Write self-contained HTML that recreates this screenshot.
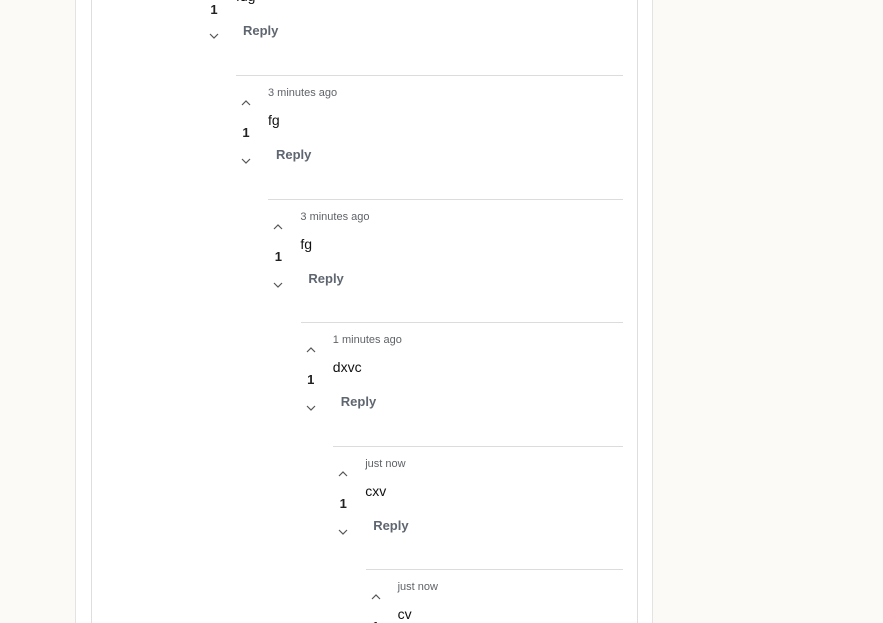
<!DOCTYPE html>
<html style="overflow:hidden;height:623px"><head><style>
body{margin:0;width:883px;height:623px;overflow:hidden;background:#fbfaf6;font-family:"Liberation Sans",sans-serif;position:relative}
.outer{position:absolute;left:75px;top:0;width:576px;height:623px;background:#fff;border-left:1px solid #e3e3e3;border-right:1px solid #e3e3e3}
.inner{position:absolute;left:91px;top:0;width:545px;height:623px;background:#fff;border-left:1px solid #dedede;border-right:1px solid #dedede}
.line{position:absolute;height:1px;background:#dcdcdc}
.t{position:absolute;font-size:11px;color:#5f6368}
.c{position:absolute;font-size:14px;color:#111}
.n{position:absolute;font-size:13px;color:#222;font-weight:bold;width:14px;text-align:center}
.r{position:absolute;font-size:13px;color:#5f6670;font-weight:bold}
svg{position:absolute}
#root{position:absolute;left:0;top:0;width:883px;height:623px;overflow:hidden}
</style></head><body>
<div class="outer"></div><div class="inner"></div>
<div id="root"></div>
<script>
var h='';
h+='<div class="c" style="left:236px;top:-12px">fdg</div>';
h+='<div class="n" style="left:207px;top:2px">1</div>';
h+='<svg style="left:208px;top:32px" width="12" height="8"><path d="M2 2l4 4 4-4" stroke="#555" stroke-width="1.2" fill="none"/></svg>';
h+='<div class="r" style="left:243px;top:23px">Reply</div>';
var data=[["3 minutes ago","fg"],["3 minutes ago","fg"],["1 minutes ago","dxvc"],["just now","cxv"],["just now","cv"]];
for(var i=0;i<5;i++){
 var x=236+i*32.4, y=75+i*123.5;
 h+='<div class="line" style="left:'+x+'px;top:'+y+'px;width:'+(623-x)+'px"></div>';
 h+='<div class="t" style="left:'+(x+32)+'px;top:'+(y+12)+'px">'+data[i][0]+'</div>';
 h+='<svg style="left:'+(x+4)+'px;top:'+(y+24)+'px" width="12" height="8"><path d="M2 6l4-4 4 4" stroke="#555" stroke-width="1.2" fill="none"/></svg>';
 h+='<div class="c" style="left:'+(x+32)+'px;top:'+(y+37)+'px">'+data[i][1]+'</div>';
 h+='<div class="n" style="left:'+(x+3)+'px;top:'+(y+50)+'px">1</div>';
 h+='<div class="r" style="left:'+(x+40)+'px;top:'+(y+72)+'px">Reply</div>';
 h+='<svg style="left:'+(x+4)+'px;top:'+(y+82)+'px" width="12" height="8"><path d="M2 2l4 4 4-4" stroke="#555" stroke-width="1.2" fill="none"/></svg>';
}
document.getElementById('root').innerHTML=h;
</script>
</body></html>
